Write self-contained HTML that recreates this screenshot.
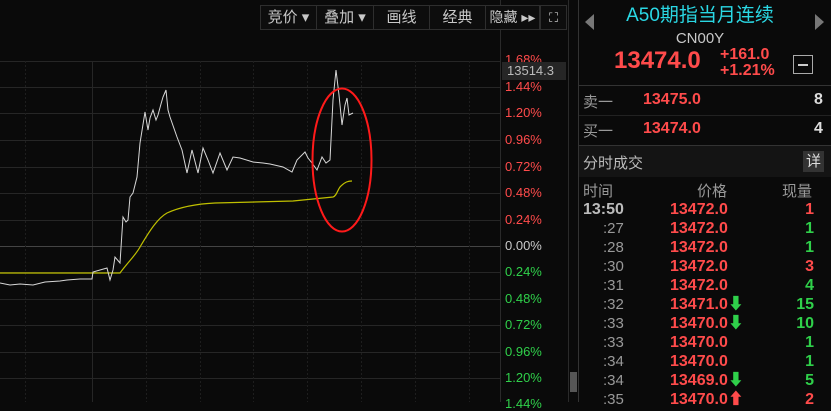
<!DOCTYPE html>
<html><head><meta charset="utf-8"><style>
*{margin:0;padding:0;box-sizing:border-box}
body{width:831px;height:402px;background:#0a0a0a;overflow:hidden;position:relative;font-family:"Liberation Sans","Noto Sans CJK SC",sans-serif}
.a{position:absolute;white-space:nowrap}
.btn{position:absolute;top:5px;height:25px;border:1px solid #2e2e2e;color:#c8c8c8;font-size:15px;line-height:23px;text-align:center;background:#0d0d0d}
.lab{position:absolute;left:505px;font-size:13px;line-height:14px}
.r{color:#ff4b4b}.g{color:#2fd04a}.w{color:#c8c8c8}
.row{position:absolute;left:580px;width:251px;height:19px;font-size:16px;font-weight:bold;line-height:19px}
.t{position:absolute;left:23px;color:#999;font-weight:normal;font-size:15px}
</style></head><body>
<svg class="a" style="left:0;top:0" width="580" height="402">
<g stroke="#262626" stroke-width="1">
<line x1="0" y1="61.5" x2="500" y2="61.5"/><line x1="0" y1="87.5" x2="500" y2="87.5"/><line x1="0" y1="113.5" x2="500" y2="113.5"/><line x1="0" y1="140.5" x2="500" y2="140.5"/><line x1="0" y1="167.5" x2="500" y2="167.5"/><line x1="0" y1="193.5" x2="500" y2="193.5"/><line x1="0" y1="220.5" x2="500" y2="220.5"/><line x1="0" y1="272.5" x2="500" y2="272.5"/><line x1="0" y1="299.5" x2="500" y2="299.5"/><line x1="0" y1="325.5" x2="500" y2="325.5"/><line x1="0" y1="352.5" x2="500" y2="352.5"/><line x1="0" y1="378.5" x2="500" y2="378.5"/>
<line x1="92.5" y1="61" x2="92.5" y2="402"/>
</g>
<line x1="0" y1="246.5" x2="500" y2="246.5" stroke="#444"/>
<g stroke="#1e1e1e" stroke-dasharray="2,2">
<line x1="25.5" y1="61" x2="25.5" y2="402"/><line x1="146.5" y1="61" x2="146.5" y2="402"/><line x1="200.5" y1="61" x2="200.5" y2="402"/><line x1="253.5" y1="61" x2="253.5" y2="402"/><line x1="307.5" y1="61" x2="307.5" y2="402"/><line x1="361.5" y1="61" x2="361.5" y2="402"/><line x1="415.5" y1="61" x2="415.5" y2="402"/><line x1="469.5" y1="61" x2="469.5" y2="402"/>
</g>
<line x1="500.5" y1="0" x2="500.5" y2="402" stroke="#2a2a2a"/>
<line x1="568.5" y1="0" x2="568.5" y2="402" stroke="#2a2a2a"/>
<line x1="578.5" y1="0" x2="578.5" y2="402" stroke="#333"/>
<path fill="none" stroke="#c0c000" stroke-width="1.2" d="M0,273 L120,273 C128,262 135,256 140,247 C150,230 158,218 167,213 C180,207 195,204 215,203 L293,201 L333,197 C337,196 338,188 341,186 C345,182 348,181 352,181"/>
<polyline fill="none" stroke="#d8d8d8" stroke-width="1" points="0,283 10,285 20,284 33,285 45,282 60,281 67,280 80,279 92,279 93,272 100,270 107,268 110,280 113,270 115,257 120,263 123,217 126,222 128,220 130,197 133,193 137,177 140,143 145,112 148,130 150,118 153,110 156,120 158,115 161,104 163,97 166,90 168,110 170,117 177,137 182,150 187,173 192,150 198,173 203,148 208,160 213,173 220,153 227,170 233,157 240,158 253,162 263,163 270,164 283,167 292,172 297,160 305,152 308,158 312,163 317,170 322,157 326,163 330,160 333,100 336,70 339,95 342,125 345,105 347,98 349,115 353,113"/>
<ellipse cx="342" cy="160" rx="29.5" ry="71.5" fill="none" stroke="#ff1a1a" stroke-width="2"/>
<rect x="570" y="372" width="7" height="20" fill="#888" opacity=".6"/>
</svg>
<div class="btn" style="left:260px;width:57px">竞价 ▾</div>
<div class="btn" style="left:316px;width:58px">叠加 ▾</div>
<div class="btn" style="left:373px;width:57px">画线</div>
<div class="btn" style="left:429px;width:57px">经典</div>
<div class="btn" style="left:485px;width:55px;font-size:14px">隐藏 ▸▸</div>
<div class="btn" style="left:540px;width:27px;font-size:13px">⛶</div>
<div class="lab r" style="top:53px">1.68%</div>
<div class="a" style="left:502px;top:62px;width:64px;height:18px;background:#262626;color:#bbb;font-size:13px;line-height:18px;padding-left:5px">13514.3</div>
<div class="lab r" style="top:80px">1.44%</div>
<div class="lab r" style="top:106px">1.20%</div>
<div class="lab r" style="top:133px">0.96%</div>
<div class="lab r" style="top:160px">0.72%</div>
<div class="lab r" style="top:186px">0.48%</div>
<div class="lab r" style="top:213px">0.24%</div>
<div class="lab w" style="top:239px">0.00%</div>
<div class="lab g" style="top:265px">0.24%</div>
<div class="lab g" style="top:292px">0.48%</div>
<div class="lab g" style="top:318px">0.72%</div>
<div class="lab g" style="top:345px">0.96%</div>
<div class="lab g" style="top:371px">1.20%</div>
<div class="lab g" style="top:397px">1.44%</div>
<div class="a" style="left:585px;top:14px;width:0;height:0;border-top:8px solid transparent;border-bottom:8px solid transparent;border-right:9px solid #777"></div>
<div class="a" style="left:815px;top:14px;width:0;height:0;border-top:8px solid transparent;border-bottom:8px solid transparent;border-left:9px solid #777"></div>
<div class="a" style="left:579px;width:242px;top:4px;text-align:center;color:#2ad8e4;font-size:19px;line-height:24px">A50期指当月连续</div>
<div class="a" style="left:579px;width:242px;top:30px;text-align:center;color:#c8c8c8;font-size:15px">CN00Y</div>
<div class="a r" style="left:614px;top:47px;font-size:24px;font-weight:bold">13474.0</div>
<div class="a r" style="left:720px;top:47px;font-size:16px;font-weight:bold;line-height:16px">+161.0<br>+1.21%</div>
<div class="a" style="left:793px;top:55px;width:20px;height:19px;border:1px solid #aaa"><div style="margin:8px 4px;height:2px;background:#ccc"></div></div>
<div class="a" style="left:579px;top:85px;width:252px;height:1px;background:#333"></div>
<div class="a" style="left:579px;top:115px;width:252px;height:1px;background:#222"></div>
<div class="a" style="left:579px;top:145px;width:252px;height:1px;background:#333"></div>
<div class="a" style="left:583px;top:91px;color:#999;font-size:15px">卖一</div>
<div class="a r" style="left:643px;top:91px;font-size:16px;font-weight:bold">13475.0</div>
<div class="a" style="left:814px;top:91px;color:#ddd;font-size:16px;font-weight:bold">8</div>
<div class="a" style="left:583px;top:120px;color:#999;font-size:15px">买一</div>
<div class="a r" style="left:643px;top:120px;font-size:16px;font-weight:bold">13474.0</div>
<div class="a" style="left:814px;top:120px;color:#ddd;font-size:16px;font-weight:bold">4</div>
<div class="a" style="left:579px;top:146px;width:252px;height:31px;background:#141414"></div>
<div class="a" style="left:583px;top:152px;color:#bbb;font-size:15px">分时成交</div>
<div class="a" style="left:803px;top:151px;width:21px;height:21px;background:#333;color:#ddd;font-size:15px;line-height:21px;text-align:center">详</div>
<div class="a" style="left:583px;top:180px;color:#999;font-size:15px">时间</div>
<div class="a" style="left:697px;top:180px;color:#999;font-size:15px">价格</div>
<div class="a" style="left:782px;top:180px;color:#999;font-size:15px">现量</div>
<div class="row" style="top:200px"><span class="a" style="left:3px;color:#bbb">13:50</span><span class="a r" style="left:90px">13472.0</span><span class="a r" style="right:17px">1</span></div>
<div class="row" style="top:219px"><span class="t">:27</span><span class="a r" style="left:90px">13472.0</span><span class="a g" style="right:17px">1</span></div>
<div class="row" style="top:238px"><span class="t">:28</span><span class="a r" style="left:90px">13472.0</span><span class="a g" style="right:17px">1</span></div>
<div class="row" style="top:257px"><span class="t">:30</span><span class="a r" style="left:90px">13472.0</span><span class="a r" style="right:17px">3</span></div>
<div class="row" style="top:276px"><span class="t">:31</span><span class="a r" style="left:90px">13472.0</span><span class="a g" style="right:17px">4</span></div>
<div class="row" style="top:295px"><span class="t">:32</span><span class="a r" style="left:90px">13471.0<span class="g">⬇</span></span><span class="a g" style="right:17px">15</span></div>
<div class="row" style="top:314px"><span class="t">:33</span><span class="a r" style="left:90px">13470.0<span class="g">⬇</span></span><span class="a g" style="right:17px">10</span></div>
<div class="row" style="top:333px"><span class="t">:33</span><span class="a r" style="left:90px">13470.0</span><span class="a g" style="right:17px">1</span></div>
<div class="row" style="top:352px"><span class="t">:34</span><span class="a r" style="left:90px">13470.0</span><span class="a g" style="right:17px">1</span></div>
<div class="row" style="top:371px"><span class="t">:34</span><span class="a r" style="left:90px">13469.0<span class="g">⬇</span></span><span class="a g" style="right:17px">5</span></div>
<div class="row" style="top:390px"><span class="t">:35</span><span class="a r" style="left:90px">13470.0⬆</span><span class="a r" style="right:17px">2</span></div>
</body></html>
